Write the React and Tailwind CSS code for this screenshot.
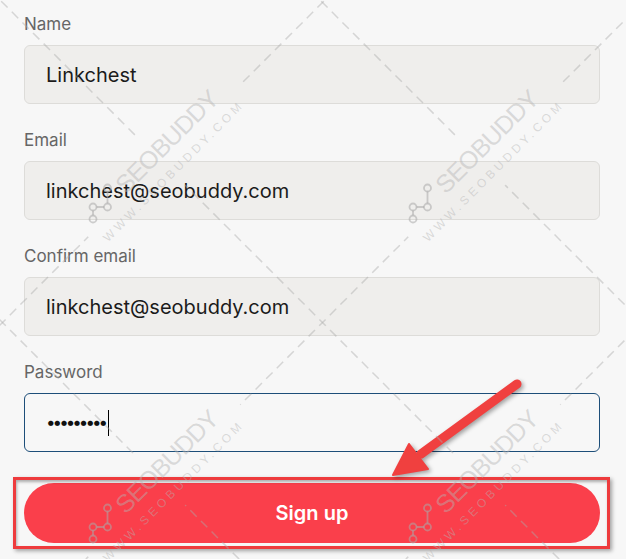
import React from "react";

const fields = [
  { label: "Name", value: "Linkchest" },
  { label: "Email", value: "linkchest@seobuddy.com" },
  { label: "Confirm email", value: "linkchest@seobuddy.com" },
];

// watermark tiles sit where the dashed diagonals cross
const marks = [
  [162.5, 162.5],
  [482.5, 162.5],
  [162.5, 482.5],
  [482.5, 482.5],
];

function Watermark() {
  const diffs = [-320, 0, 320];
  const sums = [325, 645, 965];
  return (
    <svg
      className="pointer-events-none absolute inset-0"
      width="626"
      height="559"
      viewBox="0 0 626 559"
    >
      <defs>
        <mask id="wm-gaps">
          <rect width="626" height="559" fill="white" />
          {marks.map(([cx, cy], i) => (
            <rect
              key={i}
              x="-105"
              y="-38"
              width="215"
              height="70"
              fill="black"
              transform={`translate(${cx} ${cy}) rotate(-45)`}
            />
          ))}
        </mask>
      </defs>
      <g
        mask="url(#wm-gaps)"
        stroke="rgba(170,170,170,0.45)"
        strokeWidth="1.5"
        strokeDasharray="9 6"
      >
        {diffs.map((d) => (
          <line key={"d" + d} x1={d - 20} y1={-20} x2={d + 700} y2={700} />
        ))}
        {sums.map((s) => (
          <line key={"s" + s} x1={s + 20} y1={-20} x2={s - 700} y2={700} />
        ))}
      </g>
      {marks.map(([cx, cy], i) => (
        <g key={i}>
          <g
            transform={`translate(${cx} ${cy}) rotate(-45)`}
            fill="rgba(180,180,180,0.45)"
            fontFamily="'Liberation Sans', Arial, sans-serif"
          >
            <text x="-49" y="-3" fontSize="25" textLength="134">
              SEOBUDDY
            </text>
            <text x="-95" y="18" fontSize="12" textLength="190">
              WWW.SEOBUDDY.COM
            </text>
          </g>
          <g
            transform={`translate(${cx} ${cy})`}
            stroke="rgba(170,170,170,0.55)"
            strokeWidth="1.8"
            fill="none"
          >
            <path d="M-55 29 L-55 41 M-58.5 44.5 L-66 44.5 M-69.5 48 L-69.5 53" />
            <circle cx="-55" cy="25.5" r="3.5" />
            <circle cx="-55" cy="44.5" r="3.5" />
            <circle cx="-69.5" cy="44.5" r="3.5" />
            <circle cx="-69.5" cy="56.5" r="3.5" />
          </g>
        </g>
      ))}
    </svg>
  );
}

function Field({ label, value }) {
  return (
    <div className="mb-[23px] flex flex-col">
      <label className="mb-[8px] text-[17px] leading-[26px] text-[#666666]">
        {label}
      </label>
      <div className="flex h-[59px] items-center rounded-md border border-[#dddcd9] bg-[#efeeec] px-[21px] pt-px text-[20px] text-[#1b1b1b]">
        {value}
      </div>
    </div>
  );
}

export default function App() {
  return (
    <div className="relative h-[559px] w-[626px] overflow-hidden bg-[#f7f7f7] font-['Inter','Liberation_Sans',sans-serif]">
      <form className="flex flex-col pl-6 pr-[26px] pt-[11px]">
        {fields.map((f) => (
          <Field key={f.label} label={f.label} value={f.value} />
        ))}

        <div className="flex flex-col">
          <label className="mb-[8px] text-[17px] leading-[26px] text-[#666666]">
            Password
          </label>
          <div className="flex h-[59px] items-center rounded-md border border-[#1d4e79] bg-[#f7f7f7] px-[21px] text-[#111111]">
            <span className="text-[17px] tracking-[-3px]">•••••••••</span>
            <span className="ml-[3px] h-[26px] w-px bg-black" />
          </div>
        </div>

        <button
          type="button"
          className="mt-[31px] flex h-[60px] items-center justify-center rounded-full bg-[#fa3f4b] text-[20px] font-semibold text-white"
        >
          Sign up
        </button>
      </form>

      {/* annotation box round the button */}
      <div className="pointer-events-none absolute left-[13px] top-[477px] h-[72px] w-[597px] border-[3px] border-[#ee3b3d] shadow-[2px_2px_4px_rgba(0,0,0,0.35),inset_1px_2px_3px_rgba(0,0,0,0.3)]" />

      {/* annotation arrow */}
      <svg
        className="pointer-events-none absolute inset-0"
        width="626"
        height="559"
        viewBox="0 0 626 559"
        style={{ filter: "drop-shadow(2px 2px 2px rgba(0,0,0,0.35))" }}
      >
        <line
          x1="517"
          y1="384"
          x2="421"
          y2="454"
          stroke="#f0403f"
          strokeWidth="9"
          strokeLinecap="round"
        />
        <polygon
          points="393,475 409,444 428,469"
          fill="#f0403f"
          stroke="#f0403f"
          strokeWidth="2"
          strokeLinejoin="round"
        />
      </svg>

      <Watermark />
    </div>
  );
}
